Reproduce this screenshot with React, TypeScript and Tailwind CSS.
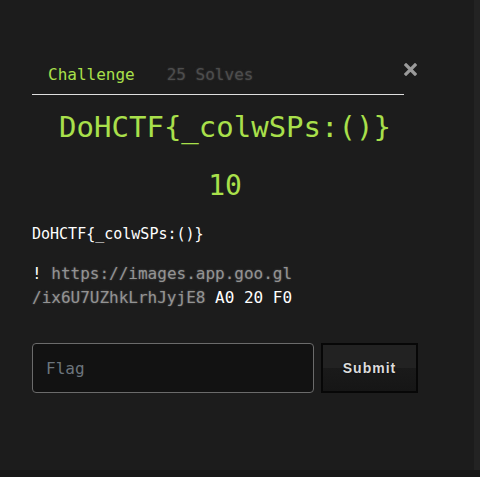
export default function App() {
  const mono = "font-['DejaVu_Sans_Mono',monospace]";
  return (
    <div className="w-[480px] h-[477px] flex flex-col bg-[#171717] overflow-hidden">
      <div className="flex h-[470px]">
        <div className={`w-[474px] bg-[#1c1c1c] px-8 pt-[56px] ${mono}`}>
          <div className="w-[386px]">
            {/* tabs + close */}
            <div className="flex items-start">
              <ul className="flex flex-1 border-b border-[#dedede]">
                <li className="px-4 py-[7px] text-[16px] leading-6 text-[#a9e04b]">Challenge</li>
                <li className="px-4 py-[7px] text-[16px] leading-6 text-[#4d4d4d] [text-shadow:0_0_2px_rgba(90,90,90,0.6)]">
                  25 Solves
                </li>
              </ul>
              <button className="w-[14px] mt-[7px] text-[#9a9a9a]">
                <svg width="13" height="13" viewBox="0 0 13 13">
                  <path d="M2 2L11 11M11 2L2 11" stroke="currentColor" strokeWidth="3.2" strokeLinecap="square" />
                </svg>
              </button>
            </div>

            <h3 className="mt-[15px] text-center text-[29px] leading-[35px] text-[#a9e04b]">
              DoHCTF{"{"}_colwSPs:(){"}"}
            </h3>
            <h4 className="mt-[24px] text-center text-[28px] leading-[34px] text-[#a9e04b]">10</h4>

            <p className="mt-[19px] text-[15px] leading-6 text-white">DoHCTF{"{"}_colwSPs:(){"}"}</p>
            <p className="mt-[16px] text-[16px] leading-6 text-white">
              !{" "}
              <span className="text-[#939393] [text-shadow:0_0_2px_rgba(150,150,150,0.5)]">
                https://images.app.goo.gl
                <br />
                /ix6U7UZhkLrhJyjE8
              </span>{" "}
              A0 20 F0
            </p>

            <form className="mt-[33px] flex gap-[7px]" onSubmit={(e) => e.preventDefault()}>
              <input
                type="text"
                placeholder="Flag"
                className={`w-[282px] h-[50px] rounded-[4px] border border-[#6b6b6b] bg-[#121212] pl-[13px] text-[16px] text-white placeholder:text-[#6c757d] outline-none ${mono}`}
              />
              <button
                type="submit"
                className="w-[97px] h-[50px] border-2 border-[#070707] bg-[linear-gradient(#222_0%,#222_50%,#1a1a1a_50%,#161616_100%)] text-[14px] font-bold tracking-[1px] text-[#dcdcdc] font-['Liberation_Sans',sans-serif] [text-shadow:0_0_2px_rgba(0,0,0,0.8)]"
              >
                Submit
              </button>
            </form>
          </div>
        </div>
        <div className="w-[6px] bg-[#232323]" />
      </div>
    </div>
  );
}
